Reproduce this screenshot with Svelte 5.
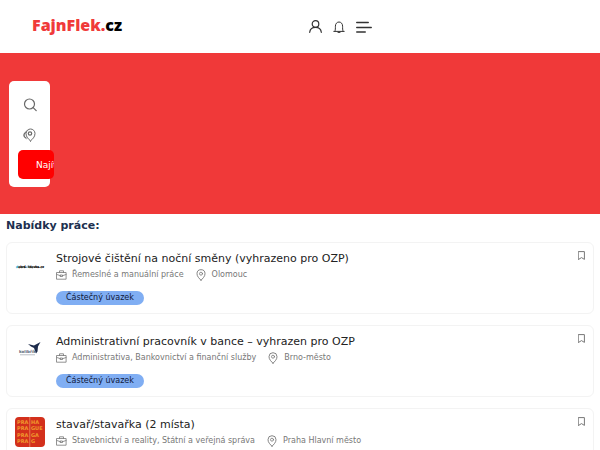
<script lang="ts">
  let keyword = '';
  let place = '';

  const jobs = [
    {
      logo: 'dobra',
      title: 'Strojové čištění na noční směny (vyhrazeno pro OZP)',
      field: 'Řemeslné a manuální práce',
      city: 'Olomouc',
      type: 'Částečný úvazek'
    },
    {
      logo: 'kolibrik',
      title: 'Administrativní pracovník v bance – vyhrazen pro OZP',
      field: 'Administrativa, Bankovnictví a finanční služby',
      city: 'Brno-město',
      type: 'Částečný úvazek'
    },
    {
      logo: 'praha',
      title: 'stavař/stavařka (2 místa)',
      field: 'Stavebnictví a reality, Státní a veřejná správa',
      city: 'Praha Hlavní město',
      type: ''
    }
  ];
</script>

<style>
  :global(body) {
    margin: 0;
    background: white;
  }

  :global(html) {
    scrollbar-width: none;
  }

  .page {
    font-family: 'DejaVu Sans', sans-serif;
    color: #222;
  }

  svg {
    display: block;
    fill: none;
    stroke: currentColor;
    stroke-linecap: round;
    stroke-linejoin: round;
  }

  a {
    color: inherit;
    text-decoration: none;
  }

  button {
    padding: 0;
    border: none;
    background: none;
    color: inherit;
    font-family: inherit;
  }

  header {
    display: flex;
    align-items: center;
    justify-content: space-between;
    height: 53px;
    padding: 0 38% 0 32px;
    box-sizing: border-box;
  }

  .brand {
    padding-bottom: 4px;
    font-family: 'Open Sans', sans-serif;
    font-weight: 800;
    font-size: 16px;
    line-height: 24px;
    color: #f03a3a;
  }

  .brand span {
    color: #000;
  }

  nav {
    display: flex;
    align-items: center;
    gap: 11px;
    color: #333;
  }

  .hero {
    background-color: #f03939;
    padding: 28px 9px 27px;
  }

  form {
    display: flex;
    flex-direction: column;
    width: 41px;
    padding: 9px 9px 8px;
    box-sizing: border-box;
    background: white;
    border-radius: 5px;
  }

  .field {
    display: flex;
    align-items: center;
    height: 30px;
    padding-left: 5px;
    color: #696969;
    overflow: hidden;
  }

  .field svg {
    flex: none;
  }

  .field input {
    width: 0;
    min-width: 0;
    padding: 0;
    border: none;
    outline: none;
  }

  .submit {
    width: 36px;
    height: 29px;
    padding-left: 18px;
    border-radius: 5px;
    background-color: #f00;
    color: white;
    font-size: 9px;
    text-align: left;
    white-space: nowrap;
    overflow: hidden;
  }

  main {
    padding: 4px 6px;
  }

  h2 {
    margin: 0 0 9px;
    font-size: 11px;
    line-height: 15px;
    color: #202f4f;
  }

  ul {
    display: flex;
    flex-direction: column;
    gap: 11px;
    margin: 0;
    padding: 0;
    list-style: none;
  }

  .job {
    display: flex;
    align-items: flex-start;
    padding: 8px;
    border: 1px solid #f3f3f3;
    border-radius: 6px;
  }

  .logo {
    flex: none;
    width: 30px;
    height: 30px;
    margin-right: 11px;
  }

  .logo svg {
    stroke: none;
  }

  .logo text {
    font-family: 'DejaVu Sans', sans-serif;
    font-weight: bold;
  }

  .info {
    flex: 1;
    min-width: 0;
  }

  h3 {
    margin: 0;
    font-size: 11px;
    font-weight: normal;
    line-height: 16px;
  }

  .meta {
    display: flex;
    gap: 11px;
    margin-bottom: 8px;
    font-size: 8px;
    line-height: 16px;
    color: #777;
  }

  .meta span {
    display: flex;
    align-items: center;
    gap: 5px;
  }

  .type {
    display: block;
    width: fit-content;
    padding: 0 10px;
    border-radius: 7px;
    background-color: #80aef3;
    color: #10183a;
    font-size: 8px;
    line-height: 14px;
  }

  .save {
    color: #777;
  }
</style>

{#snippet pin(size)}
  <svg width={size} height={size} viewBox="0 0 12 12" aria-hidden="true">
    <path d="M6 11.2C4.300 9.500 2 7.500 2 4.700a4 4 0 0 1 8 0c0 2.800-2.300 4.800-4 6.500z" stroke-width=".9" />
    <circle cx="6" cy="4.700" r="1.500" stroke-width=".8" />
  </svg>
{/snippet}

<div class="page">
  <header>
    <a class="brand" href="/">FajnFlek.<span>cz</span></a>
    <nav>
      <a href="/login" aria-label="Přihlášení">
        <svg width="13" height="13" viewBox="0 0 13 13" stroke-width="1.200">
          <circle cx="6.500" cy="4" r="3.300" />
          <path d="M.7 12.300c.3-3 2.700-5 5.800-5s5.500 2 5.800 5" />
        </svg>
      </a>
      <a href="/alerts" aria-label="Upozornění">
        <svg width="12" height="12" viewBox="0 0 12 12">
          <path d="M.8 10.400h10.400M2 10.200c.4-1.400.4-2.700.4-5C2.400 2.700 4 1 6 1s3.600 1.700 3.600 4.200c0 2.300 0 3.600.4 5M5 11.400h2" />
        </svg>
      </a>
      <button aria-label="Menu">
        <svg width="16" height="12" viewBox="0 0 16 12" stroke-width="1.300">
          <path d="M.7 1.500h11.600M.7 6.500h14.600M.7 11h8.600" />
        </svg>
      </button>
    </nav>
  </header>

  <section class="hero">
    <form on:submit|preventDefault>
      <label class="field">
        <svg width="14" height="14" viewBox="0 0 14 14" stroke-width="1.200">
          <circle cx="6.500" cy="6" r="5" />
          <path d="M10.200 9.700l3 3" />
        </svg>
        <input type="text" aria-label="Klíčové slovo" bind:value={keyword} />
      </label>
      <label class="field">
        <svg width="14" height="14" viewBox="0 0 14 14">
          <path d="M5 2.500A4.500 4.500 0 0 0 3.500 11" stroke="#bbb" />
          <path d="M3 4.500C.2 5.500.2 9 3 10" stroke-width="1.200" />
          <path d="M7.500 13C5.500 11 3 9 3 5.500a4.500 4.500 0 0 1 9 0C12 9 9.500 11 7.500 13z" />
          <circle cx="7" cy="5.500" r="1.700" stroke-width="1.200" />
        </svg>
        <input type="text" aria-label="Lokalita" bind:value={place} />
      </label>
      <button class="submit" type="submit">Najít</button>
    </form>
  </section>

  <main>
    <h2>Nabídky práce:</h2>
    <ul>
      {#each jobs as job}
        <li class="job">
          <div class="logo">
            <svg width="30" height="30" viewBox="0 0 30 30" aria-hidden="true">
              {#if job.logo === 'dobra'}
                <text x="1" y="17" font-size="3" fill="#000" stroke="#000" stroke-width=".2"><tspan fill="#18a9dc" stroke="#18a9dc">d</tspan>obrá-<tspan fill="#18a9dc" stroke="#18a9dc">l</tspan>idovka.cz</text>
              {:else if job.logo === 'kolibrik'}
                <path d="M13 10l6 1.500L25.500 8l-2.500 4.500-.5 5-1.500 2-2-5.500-3-1.500z" fill="#1c2b4b" />
                <text x="4" y="19" font-size="4" fill="#596477">kolibřík</text>
                <path d="M5 20.500h15v.7H5z" fill="#9ba3ad" />
              {:else}
                <rect width="30" height="30" rx="4" fill="#d3301c" />
                <g fill="#f0982c" font-size="5">
                  <text x="2" y="7">PRA</text><text x="16" y="7">HA</text>
                  <text x="2" y="13">PRA</text><text x="16" y="13">GUE</text>
                  <text x="2" y="20">PRA</text><text x="16" y="20">GA</text>
                  <text x="2" y="26">PRA</text><text x="16" y="26">G</text>
                </g>
                <path d="M14.500 0h.7v30h-.7z" fill="#ef9a6c" />
              {/if}
            </svg>
          </div>
          <div class="info">
            <h3><a href="/nabidky">{job.title}</a></h3>
            <div class="meta">
              <span>
                <svg width="11" height="10" viewBox="0 0 11 10" stroke-width=".8" aria-hidden="true">
                  <path d="M.9 2.500h9.200v6.700H.9zM3.500 2.500v-1.700h4v1.700M.9 4.500l3.600 1.200M10.100 4.500L6.500 5.700M4.500 5h2v1.500h-2z" />
                </svg>
                {job.field}
              </span>
              <span>{@render pin(12)} {job.city}</span>
            </div>
            {#if job.type}
              <span class="type">{job.type}</span>
            {/if}
          </div>
          <button class="save" aria-label="Uložit nabídku">
            <svg width="7" height="9" viewBox="0 0 7 9">
              <path d="M.6.600h5.800v7.800L3.500 6.600.600 8.400z" />
            </svg>
          </button>
        </li>
      {/each}
    </ul>
  </main>
</div>
